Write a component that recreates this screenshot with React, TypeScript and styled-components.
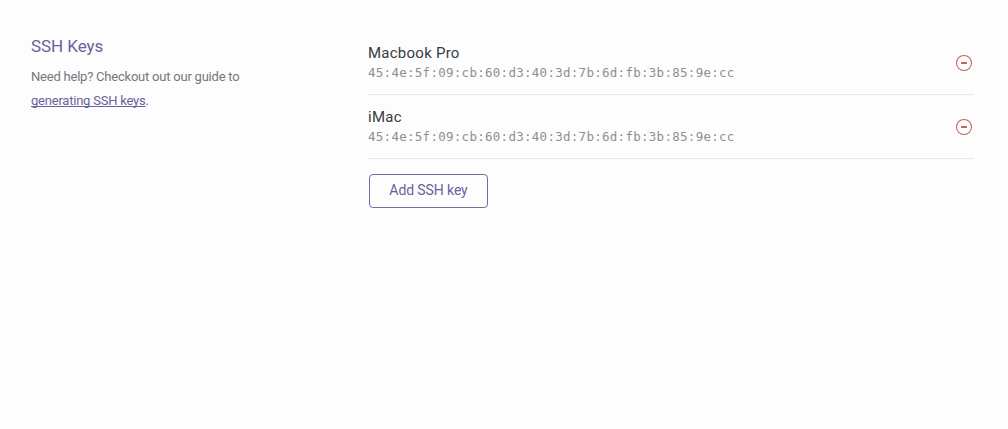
import React from "react";
import styled, { createGlobalStyle } from "styled-components";

const GlobalStyle = createGlobalStyle`
  * { box-sizing: border-box; }
  body {
    margin: 0;
    background: #fdfdfd;
    font-family: Roboto, "Liberation Sans", sans-serif;
  }
`;

const Page = styled.main`
  display: grid;
  grid-template-columns: 337px 606px;
  min-height: 429px;
  padding: 30px 34px 0 31px;
`;

const Intro = styled.section`
  padding-top: 4px;
`;

const Title = styled.h1`
  margin: 0;
  font-size: 17px;
  font-weight: 400;
  line-height: 24px;
  letter-spacing: -0.05px;
  color: #6a629b;
`;

const Help = styled.p`
  margin: 7px 0 0;
  width: 240px;
  font-size: 13px;
  line-height: 24px;
  letter-spacing: -0.22px;
  color: #74777d;
`;

const HelpLink = styled.a`
  color: #6a629b;
  text-decoration: underline;
  text-decoration-skip-ink: none;
  text-decoration-thickness: 1px;
  text-underline-offset: 1px;
`;

const KeyList = styled.ul`
  list-style: none;
  margin: 0;
  padding: 0;
`;

const KeyRow = styled.li`
  display: flex;
  align-items: flex-start;
  justify-content: space-between;
  height: 64px;
  padding: 13px 1px 0 0;
  border-bottom: 1px solid #e7e7e8;

  &:first-child {
    height: 65px;
    padding-top: 14px;
  }
`;

const KeyName = styled.div`
  font-size: 15px;
  line-height: 18px;
  letter-spacing: 0.25px;
  color: #3a3a3e;
`;

const Fingerprint = styled.div`
  margin-top: 2px;
  font-family: "DejaVu Sans Mono", monospace;
  font-size: 12.5px;
  line-height: 18px;
  letter-spacing: 0.275px;
  color: #8f8f8f;
`;

const RemoveButton = styled.button`
  display: flex;
  margin-top: 10px;
  padding: 0;
  border: 0;
  background: none;
`;

const AddButton = styled.button`
  width: 119px;
  height: 34px;
  margin: 15px 0 0 1px;
  padding: 0 0 2px;
  border: 1px solid #786a9e;
  border-radius: 4px;
  background: transparent;
  color: #6a629b;
  font-family: inherit;
  font-size: 14px;
  letter-spacing: -0.1px;
`;

const MinusIcon = () => (
  <svg width="18" height="18" viewBox="0 0 18 18" fill="none" stroke="#c0675c">
    <circle cx="9" cy="9" r="7.5" strokeWidth="1.1" />
    <path d="M6 9h6" strokeWidth="2" />
  </svg>
);

const fingerprint = "45:4e:5f:09:cb:60:d3:40:3d:7b:6d:fb:3b:85:9e:cc";
const keys = [
  { name: "Macbook Pro", fingerprint },
  { name: "iMac", fingerprint },
];

export default function App() {
  return (
    <>
      <GlobalStyle />
      <Page>
        <Intro>
          <Title>SSH Keys</Title>
          <Help>
            Need help? Checkout out our guide to{" "}
            <HelpLink href="#">generating SSH keys</HelpLink>.
          </Help>
        </Intro>
        <section>
          <KeyList>
            {keys.map((key) => (
              <KeyRow key={key.name}>
                <div>
                  <KeyName>{key.name}</KeyName>
                  <Fingerprint>{key.fingerprint}</Fingerprint>
                </div>
                <RemoveButton aria-label={`Remove ${key.name}`}>
                  <MinusIcon />
                </RemoveButton>
              </KeyRow>
            ))}
          </KeyList>
          <AddButton>Add SSH key</AddButton>
        </section>
      </Page>
    </>
  );
}
